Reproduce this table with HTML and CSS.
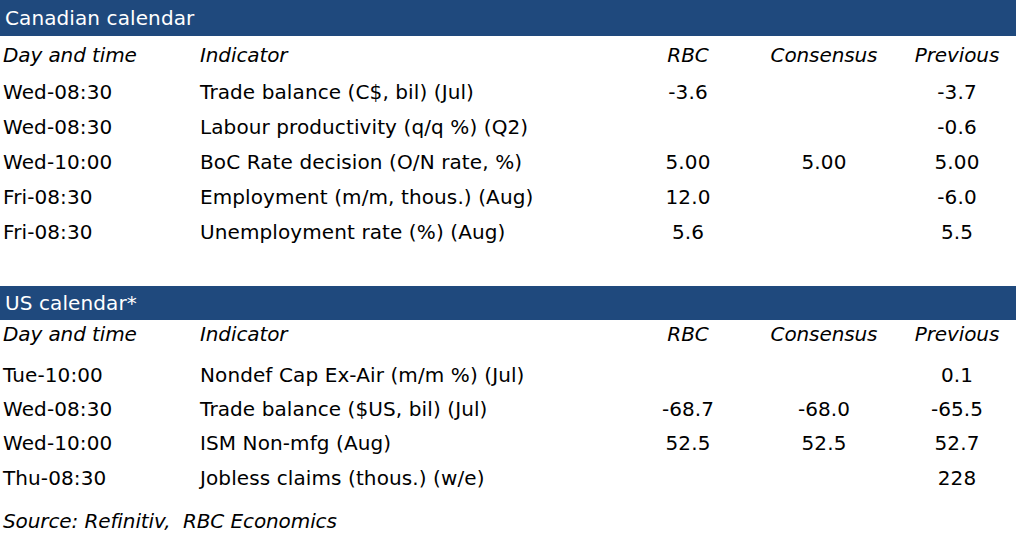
FILE: index.html
```html
<!DOCTYPE html>
<html lang="en">
<head>
<meta charset="utf-8">
<title>Calendar</title>
<link rel="stylesheet" href="styles.css">
</head>
<body>
<section class="cal">
  <div class="bar">Canadian calendar</div>
  <div class="row head"><span>Day and time</span><span>Indicator</span><span class="num">RBC</span><span class="num">Consensus</span><span class="num">Previous</span></div>
  <div class="row"><span>Wed-08:30</span><span>Trade balance (C$, bil) (Jul)</span><span class="num">-3.6</span><span class="num"></span><span class="num">-3.7</span></div>
  <div class="row"><span>Wed-08:30</span><span>Labour productivity (q/q %) (Q2)</span><span class="num"></span><span class="num"></span><span class="num">-0.6</span></div>
  <div class="row"><span>Wed-10:00</span><span>BoC Rate decision (O/N rate, %)</span><span class="num">5.00</span><span class="num">5.00</span><span class="num">5.00</span></div>
  <div class="row"><span>Fri-08:30</span><span>Employment (m/m, thous.) (Aug)</span><span class="num">12.0</span><span class="num"></span><span class="num">-6.0</span></div>
  <div class="row"><span>Fri-08:30</span><span>Unemployment rate (%) (Aug)</span><span class="num">5.6</span><span class="num"></span><span class="num">5.5</span></div>
</section>
<section class="cal us">
  <div class="bar">US calendar*</div>
  <div class="row head short"><span>Day and time</span><span>Indicator</span><span class="num">RBC</span><span class="num">Consensus</span><span class="num">Previous</span></div>
  <div class="row first"><span>Tue-10:00</span><span>Nondef Cap Ex-Air (m/m %) (Jul)</span><span class="num"></span><span class="num"></span><span class="num">0.1</span></div>
  <div class="row tight"><span>Wed-08:30</span><span>Trade balance ($US, bil) (Jul)</span><span class="num">-68.7</span><span class="num">-68.0</span><span class="num">-65.5</span></div>
  <div class="row"><span>Wed-10:00</span><span>ISM Non-mfg (Aug)</span><span class="num">52.5</span><span class="num">52.5</span><span class="num">52.7</span></div>
  <div class="row"><span>Thu-08:30</span><span>Jobless claims (thous.) (w/e)</span><span class="num"></span><span class="num"></span><span class="num">228</span></div>
  <div class="source">Source: Refinitiv,&nbsp; RBC Economics</div>
</section>
</body>
</html>
```
FILE: styles.css
```css
html, body {
  margin: 0;
  padding: 0;
  background: #ffffff;
}
body {
  font-family: "DejaVu Sans", sans-serif;
  font-size: 20px;
  letter-spacing: 0.1px;
  color: #000;
  width: 1016px;
}
.cal {
  display: flex;
  flex-direction: column;
}
.cal.us {
  margin-top: 37px;
}
.bar {
  background: #1f497d;
  color: #fff;
  height: 36px;
  line-height: 36px;
  padding-left: 5px;
}
.us .bar {
  height: 34px;
  line-height: 34px;
}
.row {
  display: grid;
  grid-template-columns: 197px 426px 124px 148px 1fr;
  padding-left: 3px;
  height: 35px;
  align-items: center;
}
.row.head {
  height: 38px;
  font-style: italic;
  letter-spacing: -0.1px;
}
.row.head.short {
  height: 28px;
}
.row.first {
  margin-top: 9px;
}
.row.tight {
  height: 33px;
}
.num {
  text-align: center;
}
.source {
  font-style: italic;
  letter-spacing: -0.1px;
  padding-left: 3px;
  height: 35px;
  line-height: 35px;
  margin-top: 9px;
}
```
